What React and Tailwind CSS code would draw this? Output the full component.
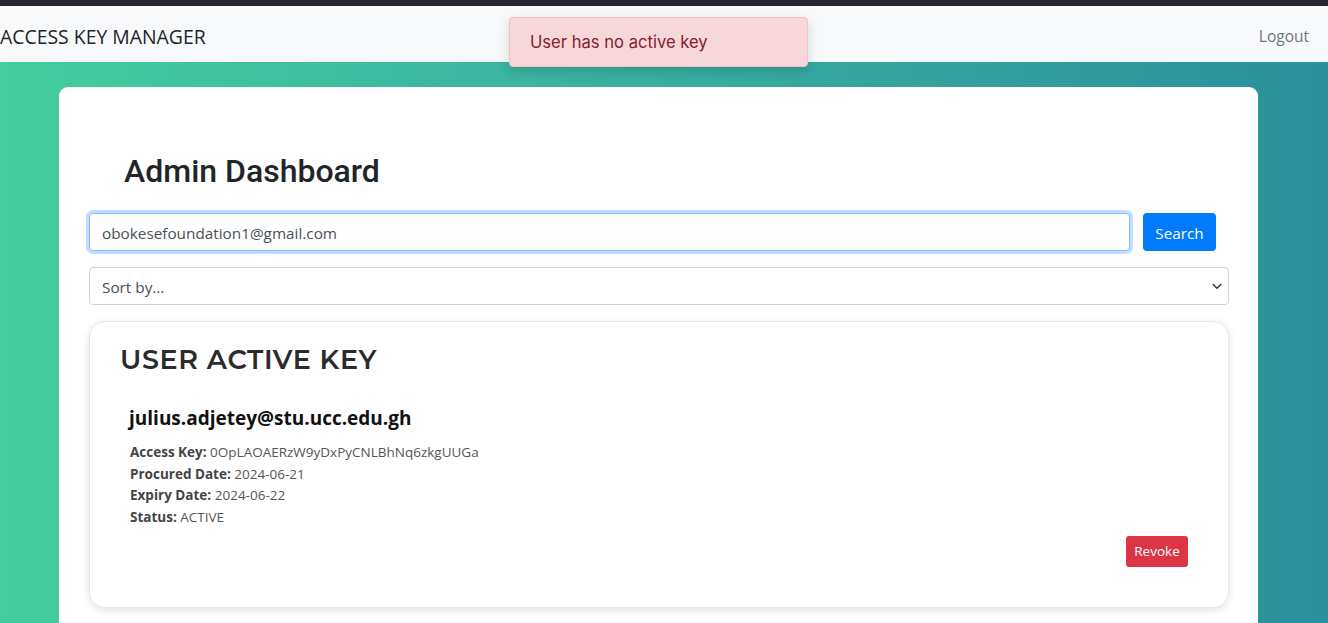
import React from "react";

const segoe = "font-['Segoe_UI','Open_Sans','Noto_Sans',sans-serif]";

function Navbar() {
  return (
    <div className="relative">
      <div className="h-[6px] bg-[#27252f]" />
      <nav className={`h-[56px] bg-[#f8f9fa] flex items-center justify-between pr-[19px] pt-[5px] ${segoe}`}>
        <span className="text-[19.4px] text-[#212529]">ACCESS KEY MANAGER</span>
        <a className="text-[15.5px] text-[#6c757d]">Logout</a>
      </nav>
      {/* toast */}
      <div className="absolute left-[509px] top-[17px] w-[299px] h-[50px] rounded-[4px] bg-[#f8d7da] border border-[#f1bfc4] shadow-[0_4px_12px_rgba(0,0,0,0.15)] flex items-center pl-[20px] font-['Inter','Lato',sans-serif] text-[16.6px] text-[#842029]">
        User has no active key
      </div>
    </div>
  );
}

function Field({ label, value }) {
  return (
    <div>
      <span className="font-bold text-[#444]">{label}:</span> <span className="text-[#555]">{value}</span>
    </div>
  );
}

export default function App() {
  return (
    <div className="h-[623px] overflow-hidden">
      <Navbar />
      <main className="h-[561px] bg-gradient-to-r from-[#45cd9f] to-[#2b909d] pt-[25px]">
        <div className="ml-[59px] w-[1199px] h-[600px] bg-white rounded-[9px] px-[30px] pt-[65px]">
          <h1 className="ml-[35px] font-['Roboto',sans-serif] font-medium text-[32px] leading-[38px] text-[#212529]">
            Admin Dashboard
          </h1>

          <div className={`mt-[23px] flex gap-[13px] ${segoe}`}>
            <div className="w-[1041px] h-[38px] rounded-[4px] border border-[#80bdff] shadow-[0_0_0_3px_rgba(0,123,255,0.25)] flex items-center px-[12px] pt-[3px] text-[15.3px] text-[#495057]">
              obokesefoundation1@gmail.com
            </div>
            <button className="w-[73px] h-[38px] rounded-[4px] bg-[#007bff] text-white text-[15.3px] pt-[3px]">Search</button>
          </div>

          <div className={`mt-[16px] w-[1140px] h-[38px] rounded-[4px] border border-[#ced4da] flex items-center justify-between pl-[12px] pr-[5px] text-[15.3px] text-[#495057] ${segoe}`}>
            <span className="pt-[3px]">Sort by...</span>
            <svg width="12" height="12" viewBox="0 0 16 16" fill="none" stroke="#343a40" strokeWidth="2" strokeLinecap="round" strokeLinejoin="round">
              <path d="M3 6l5 5 5-5" />
            </svg>
          </div>

          <div className="mt-[16px] w-[1140px] h-[287px] rounded-[16px] border border-[#e3e6ea] shadow-[0_2px_8px_rgba(0,0,0,0.12)] pl-[31px] pr-[40px] pt-[21px] flex flex-col">
            <h2 className="font-['Montserrat','Inter',sans-serif] font-semibold text-[27px] leading-[34px] text-[#2b2b2b] tracking-[0.65px] -ml-[1px]">
              USER ACTIVE KEY
            </h2>
            <div className={`ml-[8px] mt-[29px] ${segoe}`}>
              <h3 className="font-bold text-[19px] leading-[24px] text-[#111]">julius.adjetey@stu.ucc.edu.gh</h3>
              <div className="mt-[12px] ml-[1px] text-[13.5px] leading-[21.5px]">
                <Field label="Access Key" value="0OpLAOAERzW9yDxPyCNLBhNq6zkgUUGa" />
                <Field label="Procured Date" value="2024-06-21" />
                <Field label="Expiry Date" value="2024-06-22" />
                <Field label="Status" value="ACTIVE" />
              </div>
            </div>
            <div className="flex justify-end mt-[8px]">
              <button className={`w-[62px] h-[31px] rounded-[3px] bg-[#dc3545] text-white text-[13.5px] ${segoe}`}>Revoke</button>
            </div>
          </div>
        </div>
      </main>
    </div>
  );
}
